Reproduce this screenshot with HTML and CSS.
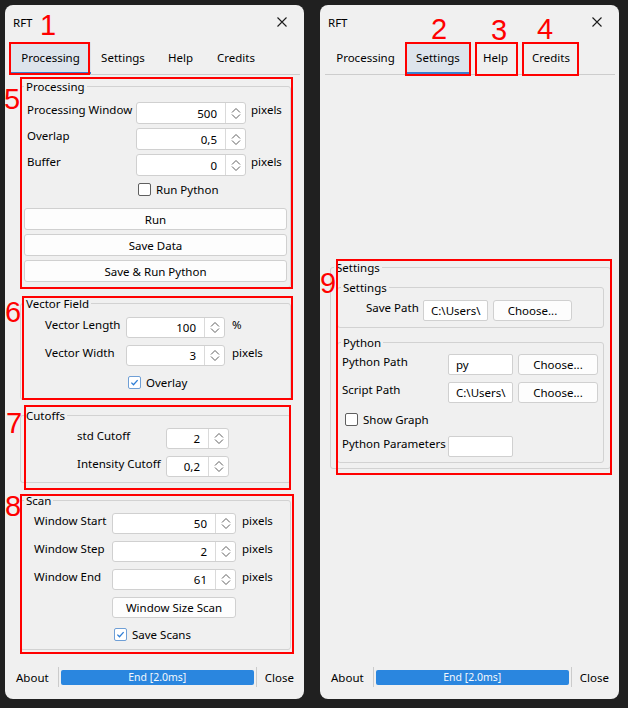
FILE: index.html
```html
<!DOCTYPE html>
<html>
<head>
<meta charset="utf-8">
<title>RFT</title>
<link rel="stylesheet" href="styles.css">
</head>
<body>
<div class="desk">
  <!-- LEFT WINDOW -->
  <div class="win">
    <div class="titlebar"><span>RFT</span><svg class="xicon" viewBox="0 0 10 10"><path d="M0.5 0.5L9.5 9.5M9.5 0.5L0.5 9.5"/></svg></div>
    <div class="tabs">
      <div class="tab tw1 sel">Processing</div>
      <div class="tab tw2">Settings</div>
      <div class="tab tw3">Help</div>
      <div class="tab tw4">Credits</div>
    </div>
    <div class="pane pane-proc">
      <div class="group g-proc">
        <div class="gtitle">Processing</div>
        <div class="form f-proc">
          <span class="lbl">Processing Window</span>
          <div class="spin"><span class="val">500</span><span class="arr"><svg viewBox="0 0 10 11"><path d="M1 4.5L5 0.5L9 4.5M1 6.5L5 10.5L9 6.5"/></svg></span></div>
          <span class="unit">pixels</span>
          <span class="lbl">Overlap</span>
          <div class="spin"><span class="val">0,5</span><span class="arr"><svg viewBox="0 0 10 11"><path d="M1 4.5L5 0.5L9 4.5M1 6.5L5 10.5L9 6.5"/></svg></span></div>
          <span></span>
          <span class="lbl">Buffer</span>
          <div class="spin"><span class="val">0</span><span class="arr"><svg viewBox="0 0 10 11"><path d="M1 4.5L5 0.5L9 4.5M1 6.5L5 10.5L9 6.5"/></svg></span></div>
          <span class="unit">pixels</span>
          <span></span>
          <div class="chk"><span class="cb"></span>Run Python</div>
        </div>
        <div class="btns">
          <div class="btn">Run</div>
          <div class="btn">Save Data</div>
          <div class="btn">Save &amp; Run Python</div>
        </div>
      </div>

      <div class="group g-vec">
        <div class="gtitle">Vector Field</div>
        <div class="form f-vec">
          <span class="lbl">Vector Length</span>
          <div class="spin"><span class="val">100</span><span class="arr"><svg viewBox="0 0 10 11"><path d="M1 4.5L5 0.5L9 4.5M1 6.5L5 10.5L9 6.5"/></svg></span></div>
          <span class="unit">%</span>
          <span class="lbl">Vector Width</span>
          <div class="spin"><span class="val">3</span><span class="arr"><svg viewBox="0 0 10 11"><path d="M1 4.5L5 0.5L9 4.5M1 6.5L5 10.5L9 6.5"/></svg></span></div>
          <span class="unit">pixels</span>
          <span></span>
          <div class="chk on"><span class="cb"><svg viewBox="0 0 13 13"><path d="M2.8 6.6L5.3 9.2L10.2 3.6"/></svg></span>Overlay</div>
        </div>
      </div>

      <div class="group g-cut">
        <div class="gtitle">Cutoffs</div>
        <div class="form f-cut">
          <span class="lbl">std Cutoff</span>
          <div class="spin"><span class="val">2</span><span class="arr"><svg viewBox="0 0 10 11"><path d="M1 4.5L5 0.5L9 4.5M1 6.5L5 10.5L9 6.5"/></svg></span></div>
          <span class="lbl">Intensity Cutoff</span>
          <div class="spin"><span class="val">0,2</span><span class="arr"><svg viewBox="0 0 10 11"><path d="M1 4.5L5 0.5L9 4.5M1 6.5L5 10.5L9 6.5"/></svg></span></div>
        </div>
      </div>

      <div class="group g-scan">
        <div class="gtitle">Scan</div>
        <div class="form f-scan">
          <span class="lbl">Window Start</span>
          <div class="spin"><span class="val">50</span><span class="arr"><svg viewBox="0 0 10 11"><path d="M1 4.5L5 0.5L9 4.5M1 6.5L5 10.5L9 6.5"/></svg></span></div>
          <span class="unit">pixels</span>
          <span class="lbl">Window Step</span>
          <div class="spin"><span class="val">2</span><span class="arr"><svg viewBox="0 0 10 11"><path d="M1 4.5L5 0.5L9 4.5M1 6.5L5 10.5L9 6.5"/></svg></span></div>
          <span class="unit">pixels</span>
          <span class="lbl">Window End</span>
          <div class="spin"><span class="val">61</span><span class="arr"><svg viewBox="0 0 10 11"><path d="M1 4.5L5 0.5L9 4.5M1 6.5L5 10.5L9 6.5"/></svg></span></div>
          <span class="unit">pixels</span>
          <span></span>
          <div class="btn">Window Size Scan</div>
          <span></span>
          <span></span>
          <div class="chk on"><span class="cb"><svg viewBox="0 0 13 13"><path d="M2.8 6.6L5.3 9.2L10.2 3.6"/></svg></span>Save Scans</div>
        </div>
      </div>
    </div>
    <div class="status">
      <span>About</span>
      <span class="sep sep1"></span>
      <div class="prog">End [2.0ms]</div>
      <span class="sep sep2"></span>
      <span>Close</span>
    </div>
  </div>

  <!-- RIGHT WINDOW -->
  <div class="win">
    <div class="titlebar"><span>RFT</span><svg class="xicon" viewBox="0 0 10 10"><path d="M0.5 0.5L9.5 9.5M9.5 0.5L0.5 9.5"/></svg></div>
    <div class="tabs">
      <div class="tab tw1">Processing</div>
      <div class="tab tw2 sel">Settings</div>
      <div class="tab tw3">Help</div>
      <div class="tab tw4">Credits</div>
    </div>
    <div class="pane pane-set">
      <div class="group g-outer">
        <div class="gtitle">Settings</div>
        <div class="group g-inset">
          <div class="gtitle">Settings</div>
          <div class="row-save">
            <span class="lbl lbl-save">Save Path</span>
            <div class="field">C:\Users\</div>
            <div class="btn btn-choose">Choose...</div>
          </div>
        </div>
        <div class="group g-py">
          <div class="gtitle">Python</div>
          <div class="form f-py">
            <span class="lbl">Python Path</span>
            <div class="field">py</div>
            <div class="btn">Choose...</div>
            <span class="lbl">Script Path</span>
            <div class="field">C:\Users\</div>
            <div class="btn">Choose...</div>
            <div class="chk chk-graph"><span class="cb"></span>Show Graph</div>
            <span class="lbl">Python Parameters</span>
            <div class="field"></div>
            <span></span>
          </div>
        </div>
      </div>
    </div>
    <div class="status">
      <span>About</span>
      <span class="sep sep1"></span>
      <div class="prog">End [2.0ms]</div>
      <span class="sep sep2"></span>
      <span>Close</span>
    </div>
  </div>
</div>

<!-- annotations -->
<div class="ann a1"></div>
<div class="ann a2"></div>
<div class="ann a3"></div>
<div class="ann a4"></div>
<div class="ann a5"></div>
<div class="ann a6"></div>
<div class="ann a7"></div>
<div class="ann a8"></div>
<div class="ann a9"></div>
<span class="num n1">1</span>
<span class="num n2">2</span>
<span class="num n3">3</span>
<span class="num n4">4</span>
<span class="num n5">5</span>
<span class="num n6">6</span>
<span class="num n7">7</span>
<span class="num n8">8</span>
<span class="num n9">9</span>
</body>
</html>
```

FILE: styles.css
```css
* { box-sizing: border-box; }
html, body { margin: 0; padding: 0; }
body {
  background: #202020;
  width: 628px;
  height: 708px;
  overflow: hidden;
  position: relative;
  font-family: "Noto Sans", "Liberation Sans", sans-serif;
  font-size: 11.5px;
  color: #000;
}
.desk { display: flex; gap: 16px; padding: 5px 0 0 5px; }
.win {
  width: 299px;
  height: 694px;
  background: #f0f0f0;
  border-radius: 8px;
  display: flex;
  flex-direction: column;
}
.titlebar {
  height: 34px;
  display: flex;
  align-items: center;
  justify-content: space-between;
  padding: 0 17px 0 8px;
}
.xicon { width: 10px; height: 10px; stroke: #1b1b1b; stroke-width: 1.1; fill: none; }

.tabs {
  margin: 3px 4px 0 5px;
  height: 33px;
  display: flex;
  border-bottom: 1px solid #cdcdcd;
}
.tab {
  height: 32px;
  display: flex;
  align-items: center;
  justify-content: center;
  border-bottom: 2px solid transparent;
  padding-top: 1px;
}
.tab.sel { background: #dde4ec; border-bottom-color: #3b7fcf; }
.tw1 { width: 81px; }
.tw2 { width: 64px; }
.tw3 { width: 51px; }
.tw4 { width: 60px; }

.pane { flex: 1; }
.pane-proc { padding: 11px 13px 0 15px; }
.pane-set { padding: 192px 8px 0 10px; }

.group { border: 1px solid #d2d2d2; border-radius: 3px; }
.gtitle {
  display: block;
  width: max-content;
  margin: -8px 0 0 3px;
  padding: 0 2px;
  line-height: 16px;
  background: #f0f0f0;
}

.g-proc { height: 202px; }
.g-vec { height: 97px; margin-top: 15px; }
.g-cut { height: 68px; margin-top: 15px; }
.g-scan { height: 150px; margin-top: 17px; }

.form { display: grid; align-items: center; }
.lbl, .unit { line-height: 16px; white-space: nowrap; }
.form > .lbl, .form > .unit { align-self: start; }
.f-proc {
  margin-top: 7px;
  padding-left: 6px;
  grid-template-columns: 104px 110px auto;
  grid-template-rows: 22px 22px 22px 19px;
  column-gap: 5px;
  row-gap: 4px;
}
.f-vec {
  margin-top: 5px;
  padding-left: 24px;
  grid-template-columns: 74px 99px auto;
  grid-template-rows: 21px 21px 19px;
  column-gap: 7px;
  row-gap: 7px;
}
.f-cut {
  margin-top: 4px;
  padding-left: 56px;
  grid-template-columns: 82px 63px;
  grid-template-rows: 21px 21px;
  column-gap: 7px;
  row-gap: 7px;
}
.f-scan {
  margin-top: 4px;
  padding-left: 13px;
  grid-template-columns: 72px 124px auto;
  grid-template-rows: 21px 21px 21px 21px 19px;
  column-gap: 6px;
  row-gap: 7px;
}

.spin {
  height: 100%;
  display: flex;
  background: #fff;
  border: 1px solid #d0d0d0;
  border-radius: 3px;
}
.val { flex: 1; text-align: right; padding-right: 8px; display: flex; align-items: center; justify-content: flex-end; }
.arr {
  width: 20px;
  border-left: 1px solid #dadada;
  display: flex;
  align-items: center;
  justify-content: center;
}
.arr svg { width: 10px; height: 11px; fill: none; stroke: #5f5f5f; stroke-width: 1; }

.chk { display: flex; align-items: center; gap: 5px; margin-left: 2px; white-space: nowrap; }
.cb {
  width: 13px;
  height: 13px;
  background: #fff;
  border: 1px solid #5f5f5f;
  border-radius: 2px;
  display: flex;
}
.chk.on .cb { border-color: #6f9fd6; }
.cb svg { width: 11px; height: 11px; fill: none; stroke: #2f7ed6; stroke-width: 1.5; }

.btn {
  height: 22px;
  background: #fdfdfd;
  border: 1px solid #d0d0d0;
  border-radius: 3px;
  display: flex;
  align-items: center;
  justify-content: center;
  white-space: nowrap;
}
.btns { margin: 9px 3px 0 3px; display: flex; flex-direction: column; gap: 4px; }
.f-scan .btn { height: 21px; }

/* settings pane */
.g-outer { height: 202px; padding: 0 6px; }
.g-outer > .gtitle { margin-left: -3px; }
.g-inset { height: 41px; margin-top: 11px; }
.row-save { display: flex; align-items: center; gap: 6px; margin-top: 4px; padding-left: 28px; height: 21px; }
.lbl-save { width: 51px; align-self: start; }
.field {
  width: 65px;
  height: 21px;
  background: #fff;
  border: 1px solid #d0d0d0;
  border-radius: 2px;
  padding: 0 0 0 7px;
  overflow: hidden;
  white-space: nowrap;
  line-height: 19px;
}
.btn-choose { width: 79px; height: 21px; margin-left: -1px; }
.g-py { height: 121px; margin-top: 14px; }
.f-py {
  margin-top: 3px;
  padding-left: 4px;
  grid-template-columns: 100px 65px 79px;
  grid-template-rows: 21px 21px 19px 21px;
  column-gap: 6px;
  row-gap: 7px;
}
.f-py .btn { height: 21px; margin-left: -1px; }
.chk-graph { grid-column: 1 / 4; margin-left: 3px; }

/* status bar */
.status {
  height: 20px;
  margin: 0 10px 12px 11px;
  display: flex;
  align-items: center;
}
.sep { width: 1px; height: 20px; background: #cbcbcb; }
.sep1 { margin: 0 2px 0 9px; }
.sep2 { margin: 0 8px 0 2px; }
.prog {
  flex: 1;
  height: 15px;
  background: #2a86df;
  border-radius: 2px;
  color: #f4f8fc;
  font-size: 10.5px;
  line-height: 15px;
  text-align: center;
}

/* annotations */
.ann { position: absolute; border: 2px solid #ff0000; }
.a1 { left: 9px; top: 42px; width: 81px; height: 33px; }
.a2 { left: 405px; top: 42px; width: 66px; height: 34px; }
.a3 { left: 475px; top: 42px; width: 43px; height: 34px; }
.a4 { left: 522px; top: 42px; width: 57px; height: 34px; }
.a5 { left: 20px; top: 77px; width: 273px; height: 212px; }
.a6 { left: 22px; top: 296px; width: 271px; height: 104px; }
.a7 { left: 24px; top: 405px; width: 267px; height: 85px; }
.a8 { left: 20px; top: 494px; width: 274px; height: 160px; }
.a9 { left: 336px; top: 259px; width: 276px; height: 216px; }

.num {
  position: absolute;
  color: #ff0000;
  font-family: "Liberation Sans", sans-serif;
  font-size: 29px;
  line-height: 29px;
}
.n1 { left: 40px; top: 11px; }
.n2 { left: 431px; top: 15px; }
.n3 { left: 491px; top: 16px; }
.n4 { left: 537px; top: 15px; }
.n5 { left: 4px; top: 85px; }
.n6 { left: 5px; top: 298px; }
.n7 { left: 6px; top: 409px; }
.n8 { left: 5px; top: 492px; }
.n9 { left: 320px; top: 269px; }
```
